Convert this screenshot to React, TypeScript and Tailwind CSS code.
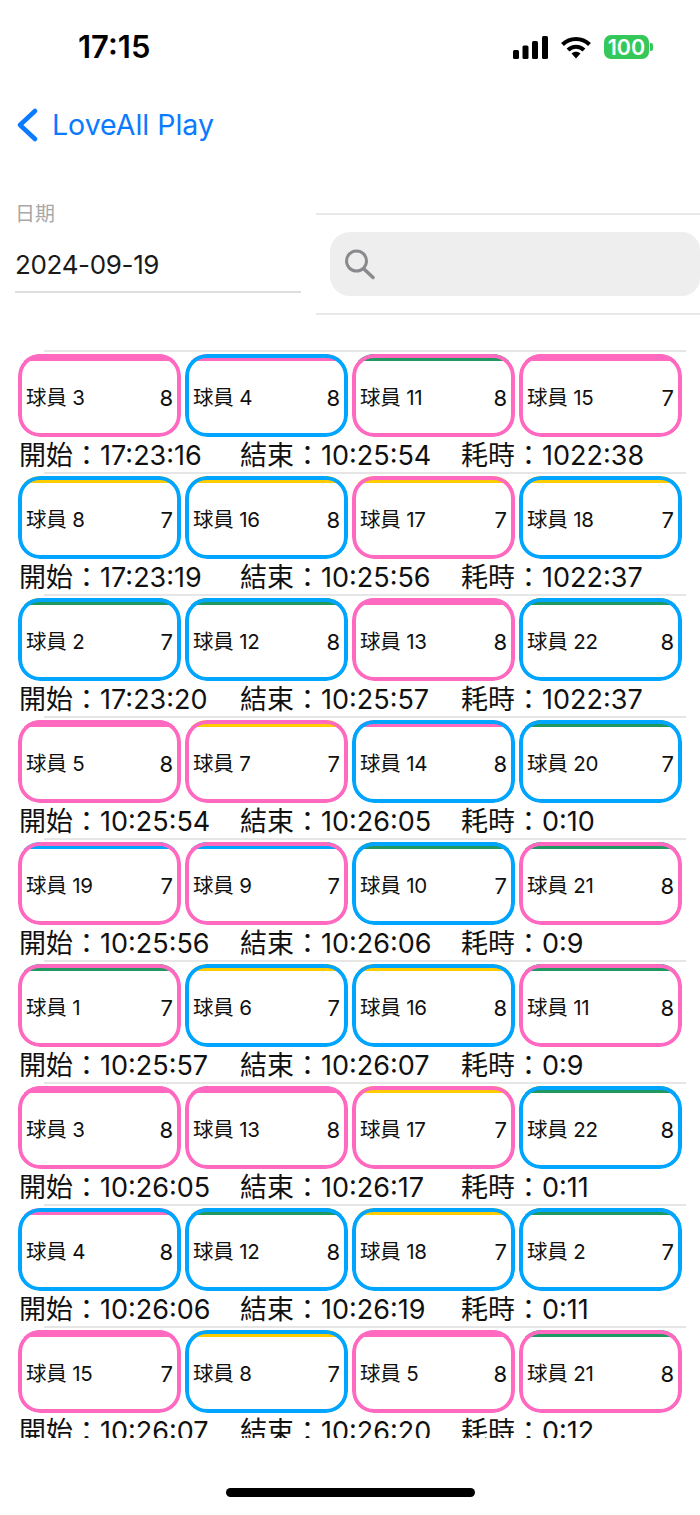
const P = "#ff69c0";
const B = "#00a5ff";
const Y = "#ffcc00";
const G = "#1f9960";

type C = [string, number, string, string];
const rows: { cards: C[]; start: string; end: string; dur: string }[] = [
  { cards: [["3", 8, P, P], ["4", 8, B, P], ["11", 8, P, G], ["15", 7, P, P]], start: "17:23:16", end: "10:25:54", dur: "1022:38" },
  { cards: [["8", 7, B, Y], ["16", 8, B, Y], ["17", 7, P, Y], ["18", 7, B, Y]], start: "17:23:19", end: "10:25:56", dur: "1022:37" },
  { cards: [["2", 7, B, G], ["12", 8, B, G], ["13", 8, P, P], ["22", 8, B, G]], start: "17:23:20", end: "10:25:57", dur: "1022:37" },
  { cards: [["5", 8, P, P], ["7", 7, P, Y], ["14", 8, B, P], ["20", 7, B, G]], start: "10:25:54", end: "10:26:05", dur: "0:10" },
  { cards: [["19", 7, P, B], ["9", 7, P, B], ["10", 7, B, G], ["21", 8, P, G]], start: "10:25:56", end: "10:26:06", dur: "0:9" },
  { cards: [["1", 7, P, G], ["6", 7, B, Y], ["16", 8, B, Y], ["11", 8, P, G]], start: "10:25:57", end: "10:26:07", dur: "0:9" },
  { cards: [["3", 8, P, P], ["13", 8, P, P], ["17", 7, P, Y], ["22", 8, B, G]], start: "10:26:05", end: "10:26:17", dur: "0:11" },
  { cards: [["4", 8, B, P], ["12", 8, B, G], ["18", 7, B, Y], ["2", 7, B, G]], start: "10:26:06", end: "10:26:19", dur: "0:11" },
  { cards: [["15", 7, P, P], ["8", 7, B, Y], ["5", 8, P, P], ["21", 8, P, G]], start: "10:26:07", end: "10:26:20", dur: "0:12" },
];

const font = { fontFamily: '"Inter","Noto Sans CJK TC",sans-serif' };

function Card({ c }: { c: C }) {
  return (
    <div className="relative w-[163px] h-[83px] rounded-[22px] overflow-hidden bg-white">
      <div className="h-[7px]" style={{ backgroundColor: c[3] }} />
      <div className="absolute inset-0 rounded-[22px] border-4" style={{ borderColor: c[2] }} />
      <div className="flex justify-between items-center h-[74px] pl-[8px] pr-[8px] text-[20.5px] text-[#111]">
        <span className="tracking-[-0.2px]">球員 {c[0]}</span>
        <span className="text-[22px]">{c[1]}</span>
      </div>
    </div>
  );
}

export default function App() {
  return (
    <div lang="zh-Hant" className="w-[700px] h-[1515px] bg-white flex flex-col relative overflow-hidden" style={font}>
      <div className="h-[94px] flex items-start justify-between pt-[28px] pl-[78px] pr-[47px] shrink-0">
        <span className="text-[31px] leading-[38px] font-semibold text-black">17:15</span>
        <div className="flex items-center h-[38px]">
          <svg width="35" height="23" viewBox="0 0 35 23">
            <rect x="0" y="14" width="6" height="9" rx="1.5" fill="#000" />
            <rect x="9.5" y="9.5" width="6" height="13.5" rx="1.5" fill="#000" />
            <rect x="19" y="5" width="6" height="18" rx="1.5" fill="#000" />
            <rect x="29" y="0" width="6" height="23" rx="1.5" fill="#000" />
          </svg>
          <svg className="ml-[13px] mr-[13px]" width="30" height="23" viewBox="0 0 30 23">
            <path d="M1.5 8.5C9 1 21 1 28.5 8.5" fill="none" stroke="#000" strokeWidth="4" />
            <path d="M7 14C11.5 9.5 18.5 9.5 23 14" fill="none" stroke="#000" strokeWidth="4" />
            <path d="M10.5 17.5L15 22.5L19.5 17.5C17 15 13 15 10.5 17.5Z" fill="#000" />
          </svg>
          <div className="flex items-center">
            <div className="w-[45px] h-[24px] rounded-[7px] bg-[#34c759] text-white text-[21.5px] leading-[24px] font-semibold text-center">100</div>
            <div className="w-[3px] h-[8px] rounded-r-[2px] bg-[#34c759] ml-[1px]" />
          </div>
        </div>
      </div>

      <div className="h-[62px] flex items-center pl-[16px] shrink-0">
        <svg width="22" height="34" viewBox="0 0 22 34">
          <path d="M19 3L4 17L19 31" fill="none" stroke="#0a7aff" strokeWidth="4.5" strokeLinecap="round" strokeLinejoin="round" />
        </svg>
        <span className="ml-[14px] text-[28.5px] text-[#0a7aff]">LoveAll Play</span>
      </div>

      <div className="flex h-[102px] mt-[57px] shrink-0">
        <div className="w-[316px] pl-[15px] pr-[15px] shrink-0 -mt-[13px]">
          <div className="text-[20px] leading-[28px] text-[#a8a8a8]">日期</div>
          <div className="h-[53px] mt-[12px] border-b-2 border-[#dedede] text-[26px] tracking-[-0.35px] leading-[49px] text-[#1a1a1a]">2024-09-19</div>
        </div>
        <div className="flex-1 border-y-2 border-[#e8e8e8] pl-[14px] flex items-center h-[102px]">
          <div className="w-full h-[64px] rounded-l-[20px] rounded-r-[18px] bg-[#eeeeee] flex items-center pl-[13px]">
            <svg width="32" height="32" viewBox="0 0 32 32">
              <circle cx="13.5" cy="13" r="10" fill="none" stroke="#8a8a8e" strokeWidth="3" />
              <path d="M21 21L30 29.5" stroke="#8a8a8e" strokeWidth="3.5" strokeLinecap="round" />
            </svg>
          </div>
        </div>
      </div>

      <div className="mt-[35px] h-[1088px] overflow-hidden shrink-0">
        {rows.map((r, i) => (
          <div key={i} className="h-[122px]">
            <div className="ml-[44px] w-[642px] h-[2px] bg-[#e6e6e6]" />
            <div className="flex gap-[4px] pl-[18px] pt-[2px]">
              {r.cards.map((c, j) => <Card key={j} c={c} />)}
            </div>
            <div className="flex pl-[19px] text-[27px] leading-[34px] text-[#111] h-[34px] mt-[2px]">
              <span className="w-[221px]">開始：{r.start}</span>
              <span className="w-[221px]">結束：{r.end}</span>
              <span>耗時：{r.dur}</span>
            </div>
          </div>
        ))}
      </div>

      <div className="flex justify-center pt-[50px]">
        <div className="w-[249px] h-[9px] rounded-full bg-black" />
      </div>
    </div>
  );
}
